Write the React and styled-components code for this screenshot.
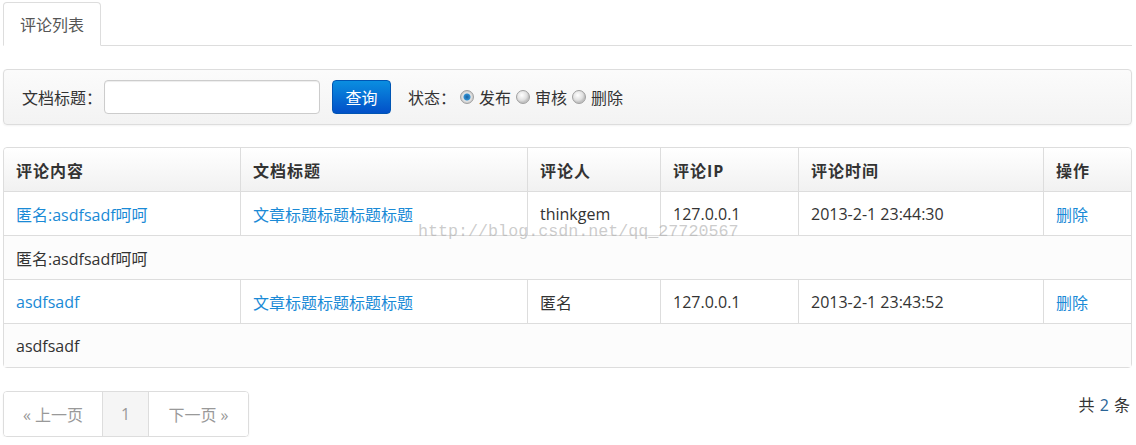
import React from 'react';
import styled, { createGlobalStyle } from 'styled-components';

const GlobalStyle = createGlobalStyle`
  body {
    margin: 0;
    background: #fff;
    font-family: "Open Sans", "Noto Sans CJK SC", sans-serif;
    font-size: 16px;
    color: #333;
  }
`;

const Page = styled.div`
  position: relative;
  width: 1129px;
  padding: 2px 4px 0 3px;
`;

const Tabs = styled.div`
  display: flex;
  height: 43px;
  border-bottom: 1px solid #ddd;
`;

const Tab = styled.div`
  display: flex;
  align-items: center;
  height: 42px;
  padding: 0 16px;
  margin-bottom: -1px;
  background: #fff;
  border: 1px solid #ddd;
  border-bottom-color: #fff;
  border-radius: 4px 4px 0 0;
  color: #555;
`;

const SearchBar = styled.div`
  display: flex;
  align-items: center;
  height: 54px;
  margin-top: 23px;
  padding: 0 18px;
  border: 1px solid #ddd;
  border-radius: 4px;
  background: linear-gradient(#fbfbfb, #f3f3f3);
  box-shadow: 0 1px 2px rgba(0, 0, 0, 0.05);
`;

const Label = styled.span`
  margin-right: 2px;
`;

const Input = styled.input`
  width: 214px;
  height: 32px;
  padding: 0;
  border: 1px solid #ccc;
  border-radius: 4px;
  background: #fff;
  box-shadow: inset 0 1px 1px rgba(0, 0, 0, 0.075);
`;

const Button = styled.button`
  width: 59px;
  height: 34px;
  margin-left: 12px;
  padding: 0;
  border: 1px solid #0055b3;
  border-radius: 4px;
  background: linear-gradient(#0a8ee0, #0250c8);
  color: #fff;
  font: inherit;
`;

const Status = styled.div`
  display: flex;
  align-items: center;
  margin-left: 17px;
`;

const Radio = styled.span`
  display: inline-block;
  box-sizing: border-box;
  width: 14px;
  height: 14px;
  margin: 0 5px 0 ${(p) => (p.checked ? 4 : 5)}px;
  border-radius: 50%;
  border: 1px solid #a0a0a0;
  background: ${(p) =>
    p.checked
      ? 'radial-gradient(circle, #1a5fa0 0, #2f8fd0 3px, #e6e6e6 4px, #bdbdbd 7px)'
      : 'radial-gradient(circle at 40% 35%, #fff 0, #e0e0e0 5px, #c2c2c2 7px)'};
`;

const Table = styled.table`
  width: 1129px;
  margin-top: 22px;
  border: 1px solid #ddd;
  border-collapse: separate;
  border-spacing: 0;
  border-radius: 4px;
  table-layout: fixed;
`;

const Th = styled.th`
  height: 43px;
  padding: 0 12px;
  text-align: left;
  font-weight: bold;
  letter-spacing: 1px;
  color: #333;
  background: linear-gradient(#fff, #f1f1f1);
  border-left: ${(p) => (p.first ? 'none' : '1px solid #ddd')};
  &:first-child {
    border-top-left-radius: 4px;
  }
  &:last-child {
    border-top-right-radius: 4px;
  }
`;

const Td = styled.td`
  height: 43px;
  padding: 0 12px;
  border-top: 1px solid #ddd;
  border-left: ${(p) => (p.first ? 'none' : '1px solid #ddd')};
  background: ${(p) => (p.detail ? '#fcfcfc' : '#fff')};
  color: ${(p) => (p.link ? '#1a8ad6' : '#333')};
  white-space: nowrap;
`;

const Footer = styled.div`
  display: flex;
  justify-content: space-between;
  align-items: flex-start;
  margin-top: 23px;
`;

const Pager = styled.div`
  display: flex;
  height: 44px;
  border: 1px solid #ddd;
  border-radius: 4px;
  box-shadow: 0 1px 2px rgba(0, 0, 0, 0.05);
  overflow: hidden;
`;

const PageItem = styled.div`
  display: flex;
  align-items: center;
  justify-content: center;
  width: ${(p) => p.w}px;
  border-left: ${(p) => (p.first ? 'none' : '1px solid #ddd')};
  background: ${(p) => (p.active ? '#f5f5f5' : '#fff')};
  color: #999;
`;

const Total = styled.div`
  margin-top: 1px;
  padding-right: 2px;
  color: #333;
  word-spacing: 1px;
`;

const Num = styled.span`
  color: #2a6496;
`;

const Watermark = styled.div`
  position: absolute;
  left: 418px;
  top: 222px;
  font-family: "Liberation Mono", monospace;
  font-size: 16.7px;
  color: rgba(170, 170, 170, 0.6);
  pointer-events: none;
`;

const cols = [236, 287, 133, 138, 245, 88];
const heads = ['评论内容', '文档标题', '评论人', '评论IP', '评论时间', '操作'];

const rows = [
  {
    content: '匿名:asdfsadf呵呵',
    title: '文章标题标题标题标题',
    user: 'thinkgem',
    ip: '127.0.0.1',
    time: '2013-2-1 23:44:30',
    detail: '匿名:asdfsadf呵呵',
  },
  {
    content: 'asdfsadf',
    title: '文章标题标题标题标题',
    user: '匿名',
    ip: '127.0.0.1',
    time: '2013-2-1 23:43:52',
    detail: 'asdfsadf',
  },
];

export default function App() {
  return (
    <Page>
      <GlobalStyle />
      <Tabs>
        <Tab>评论列表</Tab>
      </Tabs>
      <SearchBar>
        <Label>文档标题：</Label>
        <Input />
        <Button>查询</Button>
        <Status>
          <span>状态：</span>
          <Radio checked />
          <span>发布</span>
          <Radio />
          <span>审核</span>
          <Radio />
          <span>删除</span>
        </Status>
      </SearchBar>
      <Table>
        <colgroup>
          {cols.map((w, i) => (
            <col key={i} style={{ width: w }} />
          ))}
        </colgroup>
        <thead>
          <tr>
            {heads.map((h, i) => (
              <Th key={h} first={i === 0}>
                {h}
              </Th>
            ))}
          </tr>
        </thead>
        <tbody>
          {rows.map((r, i) => (
            <React.Fragment key={i}>
              <tr>
                <Td first link>{r.content}</Td>
                <Td link>{r.title}</Td>
                <Td>{r.user}</Td>
                <Td>{r.ip}</Td>
                <Td>{r.time}</Td>
                <Td link>删除</Td>
              </tr>
              <tr>
                <Td first detail colSpan={6}>
                  {r.detail}
                </Td>
              </tr>
            </React.Fragment>
          ))}
        </tbody>
      </Table>
      <Footer>
        <Pager>
          <PageItem first w={98}>« 上一页</PageItem>
          <PageItem active w={45}>1</PageItem>
          <PageItem w={99}>下一页 »</PageItem>
        </Pager>
        <Total>
          共 <Num>2</Num> 条
        </Total>
      </Footer>
      <Watermark>http://blog.csdn.net/qq_27720567</Watermark>
    </Page>
  );
}
